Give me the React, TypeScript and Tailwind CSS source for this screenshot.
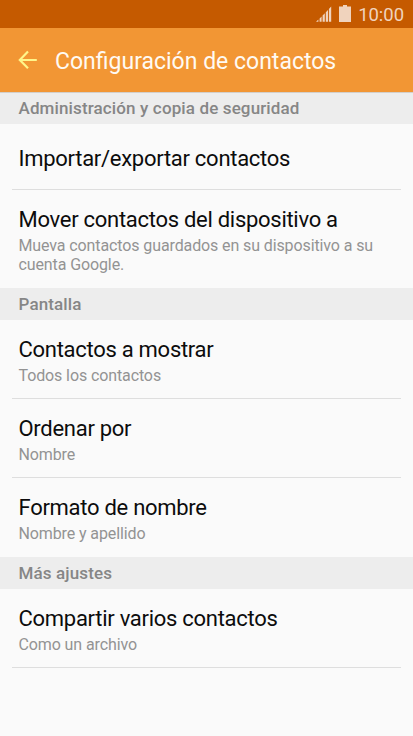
import React from 'react';

interface Setting {
  title: string;
  description?: string;
}

interface Section {
  heading: string;
  settings: Setting[];
}

const sections: Section[] = [
  {
    heading: 'Administración y copia de seguridad',
    settings: [
      { title: 'Importar/exportar contactos' },
      {
        title: 'Mover contactos del dispositivo a',
        description: 'Mueva contactos guardados en su dispositivo a su cuenta Google.',
      },
    ],
  },
  {
    heading: 'Pantalla',
    settings: [
      { title: 'Contactos a mostrar', description: 'Todos los contactos' },
      { title: 'Ordenar por', description: 'Nombre' },
      { title: 'Formato de nombre', description: 'Nombre y apellido' },
    ],
  },
  {
    heading: 'Más ajustes',
    settings: [{ title: 'Compartir varios contactos', description: 'Como un archivo' }],
  },
];

function StatusBar() {
  return (
    <div className="flex h-7 items-center justify-end bg-[#c55a00] pr-[9px] text-[#f0d3bd]">
      <svg className="h-4 w-4" viewBox="0 0 16 16" fill="currentColor">
        <path d="M0 15.7L2.4 13.4V15.7zM3.6 12.4L5.6 10.4V15.7H3.6zM6.6 9.4L8.8 7.2V15.7H6.6zM9.8 6.2L12 4V15.7H9.8zM12.9 3L15.2 0.5V15.7H12.9z" />
      </svg>
      <svg className="ml-[7px] h-[18px] w-3" viewBox="0 0 12 18" fill="currentColor">
        <path d="M4 0H8V1.5H12V17H0V1.5H4z" />
      </svg>
      <span className="ml-[7.5px] pt-px text-[18.5px] leading-7 tracking-[-0.05px]">10:00</span>
    </div>
  );
}

function Header() {
  return (
    <header className="flex h-16 items-center bg-[#f29634] pl-[18px]">
      <svg
        className="h-5 w-5 text-[#fff58a]"
        viewBox="0 0 20 20"
        fill="none"
        stroke="currentColor"
        strokeWidth="2.2"
      >
        <path d="M10 1.5L1.8 10L10 18.3M2 10H18.8" />
      </svg>
      <h1 className="ml-[17px] pt-1 text-[23px] leading-7 whitespace-nowrap text-[#fffaf3]">
        Configuración de contactos
      </h1>
    </header>
  );
}

function SettingRow({ title, description }: Setting) {
  return (
    <li className="mx-3 border-b border-[#dedede] pr-[6px] pl-[6.5px]">
      <div className={description ? 'pt-[17px] pb-[13px]' : 'pt-[22px] pb-[17px]'}>
        <p className="text-[22px] leading-[26px] tracking-[-0.28px] whitespace-nowrap text-[#0c0c0c]">
          {title}
        </p>
        {description && (
          <p className="mt-[3px] text-base leading-[19px] tracking-[-0.11px] text-[#939393]">
            {description}
          </p>
        )}
      </div>
    </li>
  );
}

export default function App() {
  return (
    <div className="min-h-screen bg-[#fafafa] font-[Roboto,sans-serif]">
      <StatusBar />
      <Header />
      {sections.map((section) => (
        <section key={section.heading} className="group">
          <h2 className="h-8 border-t border-transparent bg-[#ededed] pl-[18.5px] text-[17px] leading-[30px] font-medium tracking-[0.13px] text-[#868686] group-first-of-type:border-t-[#d3cfca]">
            {section.heading}
          </h2>
          <ul className="group-not-last:[&>li:last-child]:border-transparent">
            {section.settings.map((setting) => (
              <SettingRow key={setting.title} {...setting} />
            ))}
          </ul>
        </section>
      ))}
    </div>
  );
}
